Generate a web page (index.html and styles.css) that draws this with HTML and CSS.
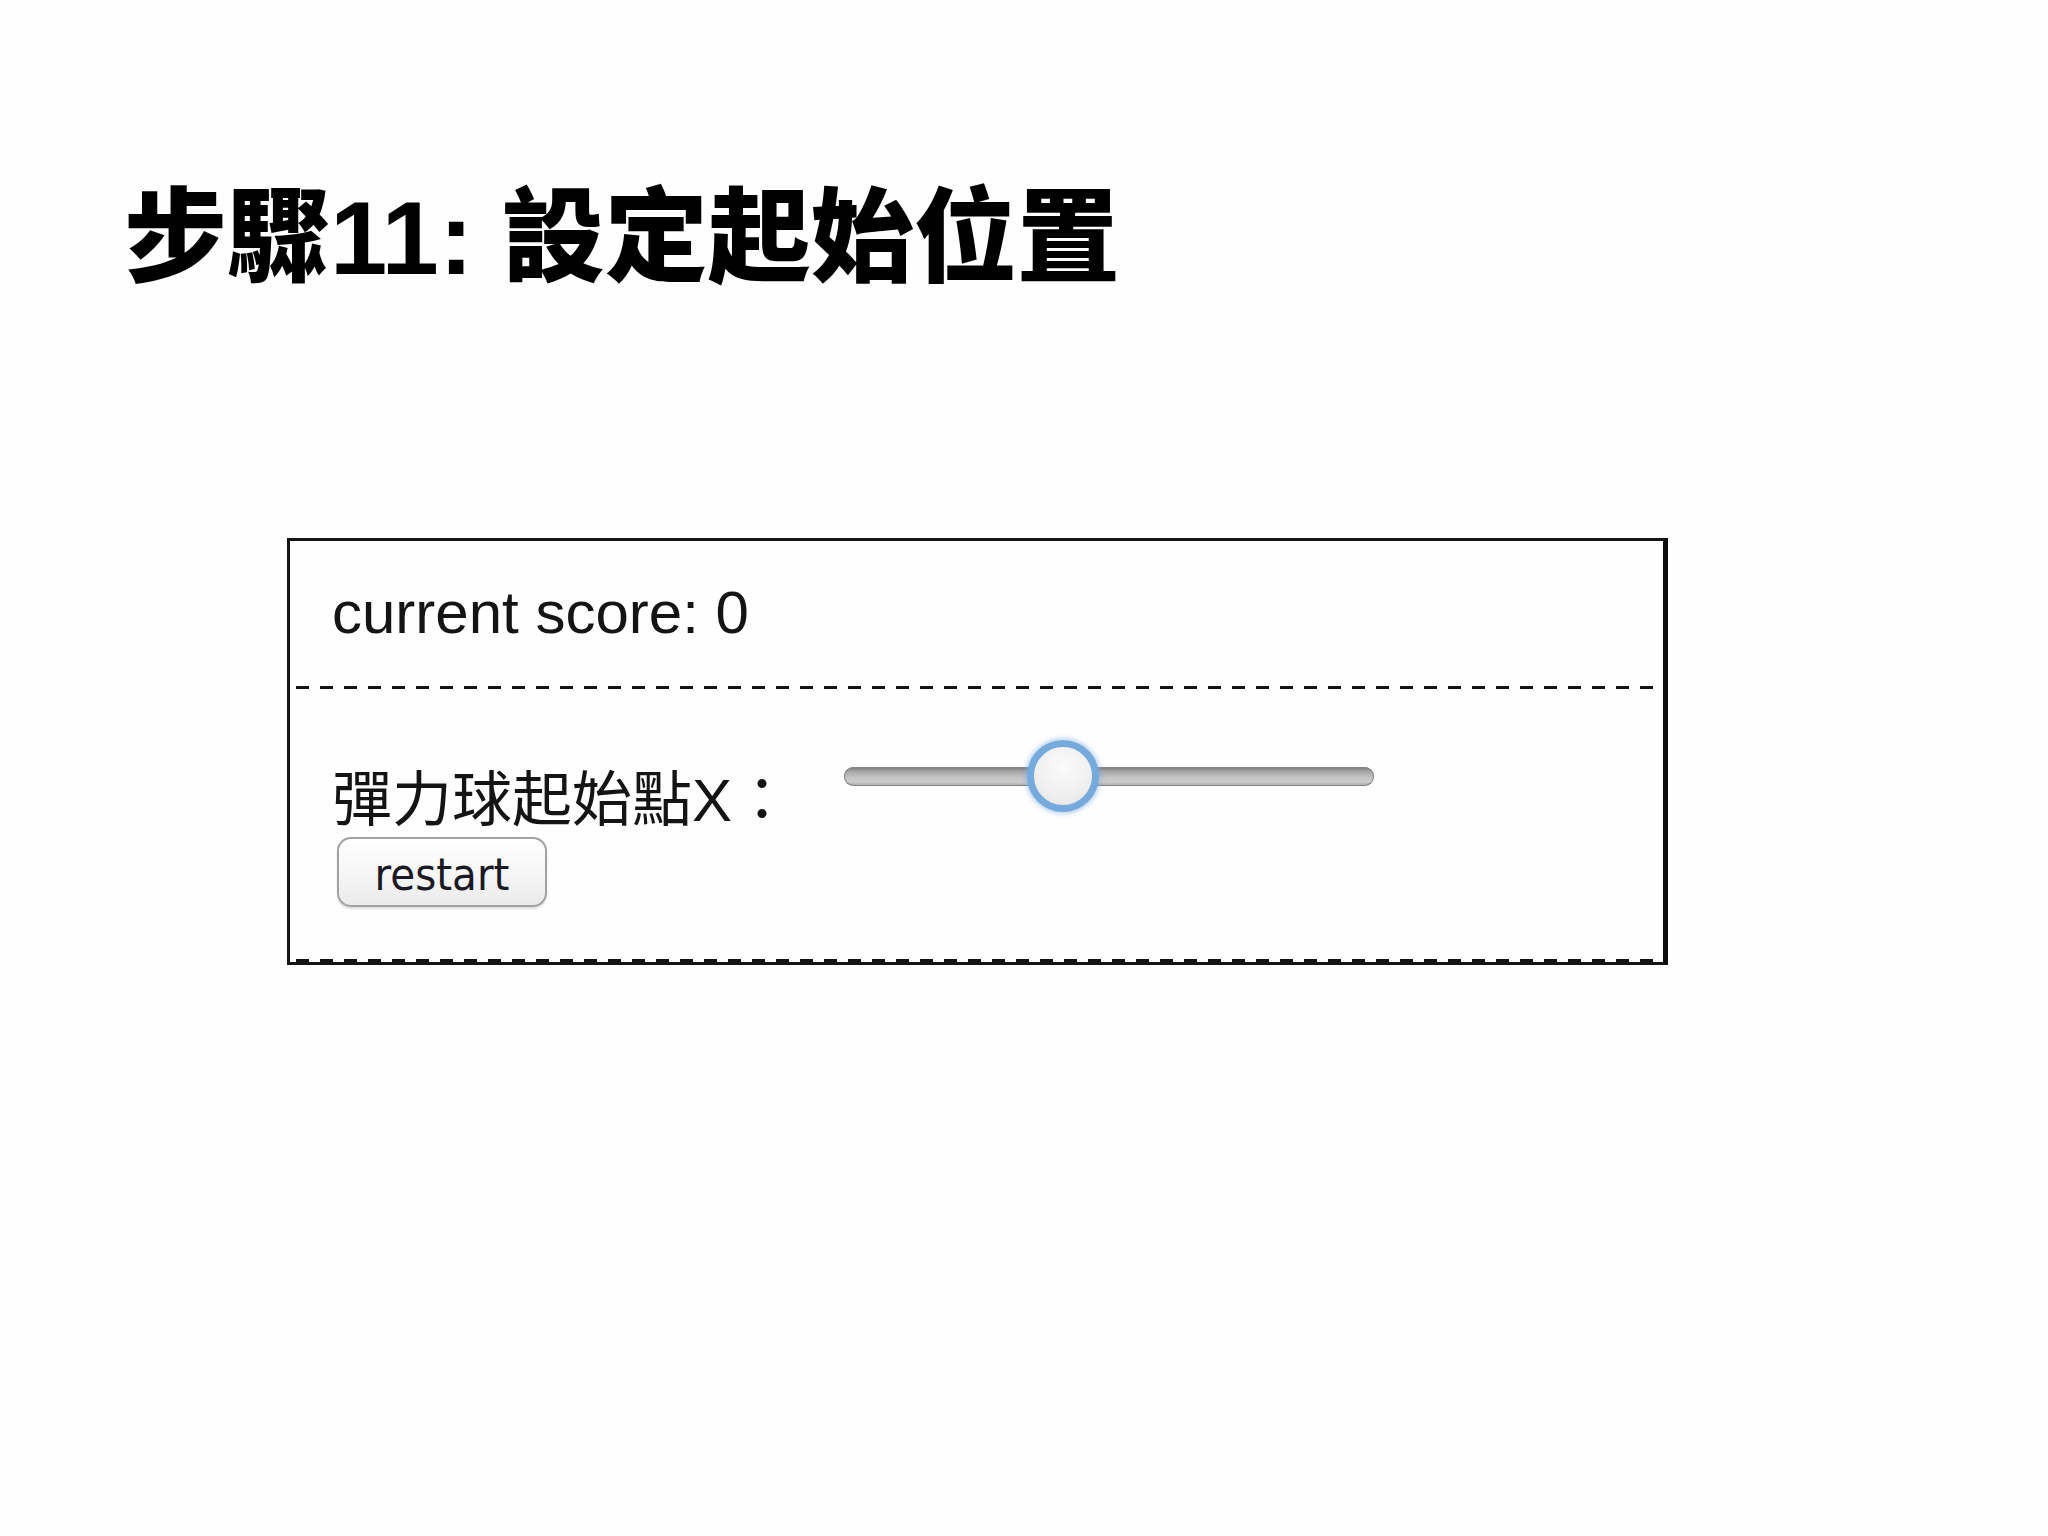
FILE: index.html
```html
<!DOCTYPE html>
<html lang="zh-Hant">
<head>
<meta charset="utf-8">
<title>步驟11: 設定起始位置</title>
<link rel="stylesheet" href="styles.css">
</head>
<body>
  <h1 class="slide-title">步驟11: 設定起始位置</h1>

  <div class="game-panel">
    <div class="panel-section score-section">
      <span class="score">current score: 0</span>
    </div>
    <div class="panel-section controls-section">
      <div class="control-row">
        <label class="control-label" for="start-x">彈力球起始點X：</label>
        <input class="range" id="start-x" type="range" min="0" max="100" value="40">
      </div>
      <button class="btn" type="button">restart</button>
    </div>
  </div>
</body>
</html>
```

FILE: styles.css
```css
html, body {
  margin: 0;
  padding: 0;
}

body {
  background: #fefefe;
  width: 2048px;
  height: 1536px;
  color: #1c1c1c;
  font-family: "Liberation Sans", "Noto Sans CJK TC", sans-serif;
}

/* slide heading */
.slide-title {
  margin: 187px 0 0 124px;
  font-size: 103px;
  line-height: 103px;
  font-weight: 900;
  color: #000;
  letter-spacing: 0;
}

/* framed demo panel */
.game-panel {
  box-sizing: border-box;
  width: 1381px;
  margin: 248px 0 0 287px;
  border-top: 3px solid #151515;
  border-left: 3px solid #151515;
  border-right: 5px solid #0d0d0d;
  border-bottom: 3px solid #151515;
  background: #fefefe;
}

/* each section ends in a dashed rule */
.panel-section {
  padding-left: 42px;
  padding-right: 42px;
  background-image: repeating-linear-gradient(90deg, #141414 0 13px, transparent 13px 24px);
  background-size: 100% 3px;
  background-position: 6px 100%;
  background-repeat: no-repeat;
}

.score-section {
  padding-top: 37px;
  padding-bottom: 42px;
}

.score {
  display: block;
  font-size: 60px;
  line-height: 69px;
  color: #141414;
}

.controls-section {
  padding-top: 77px;
  padding-bottom: 55px;
}

.control-row {
  display: flex;
  align-items: flex-start;
}

.control-label {
  font-size: 60px;
  line-height: 69px;
  color: #141414;
  white-space: nowrap;
}

/* range slider */
.range {
  -webkit-appearance: none;
  appearance: none;
  width: 530px;
  height: 76px;
  margin: -28px 0 0 52px;
  padding: 0;
  background: transparent;
}

.range:focus {
  outline: none;
}

.range::-webkit-slider-runnable-track {
  height: 19px;
  border-radius: 10px;
  background: linear-gradient(#747474 0, #a4a4a4 22%, #c2c2c2 52%, #cccccc 78%, #a6a6a6 100%);
  box-shadow: inset 0 0 0 1px #858585;
}

.range::-webkit-slider-thumb {
  -webkit-appearance: none;
  appearance: none;
  box-sizing: border-box;
  width: 72px;
  height: 72px;
  margin-top: -27px;
  border-radius: 50%;
  border: 7px solid #76aadd;
  background: radial-gradient(circle at 50% 35%, #fbfbfb 0, #f0f0f0 55%, #e2e2e2 100%);
  box-shadow: 0 0 4px 2px rgba(120, 170, 225, 0.5);
}

/* push button */
.btn {
  display: flex;
  align-items: center;
  justify-content: center;
  box-sizing: border-box;
  width: 210px;
  height: 70px;
  margin: 2px 0 0 5px;
  padding: 4px 0 0 0;
  border: 2px solid #a2a2a2;
  border-radius: 14px;
  background: linear-gradient(#ffffff 0, #f7f7f7 45%, #ebebeb 100%);
  box-shadow: 0 2px 2px rgba(0, 0, 0, 0.12);
  font-family: "DejaVu Sans Condensed", "DejaVu Sans", sans-serif;
  font-stretch: condensed;
  font-size: 45px;
  line-height: 1;
  color: #1a1a24;
}
```
